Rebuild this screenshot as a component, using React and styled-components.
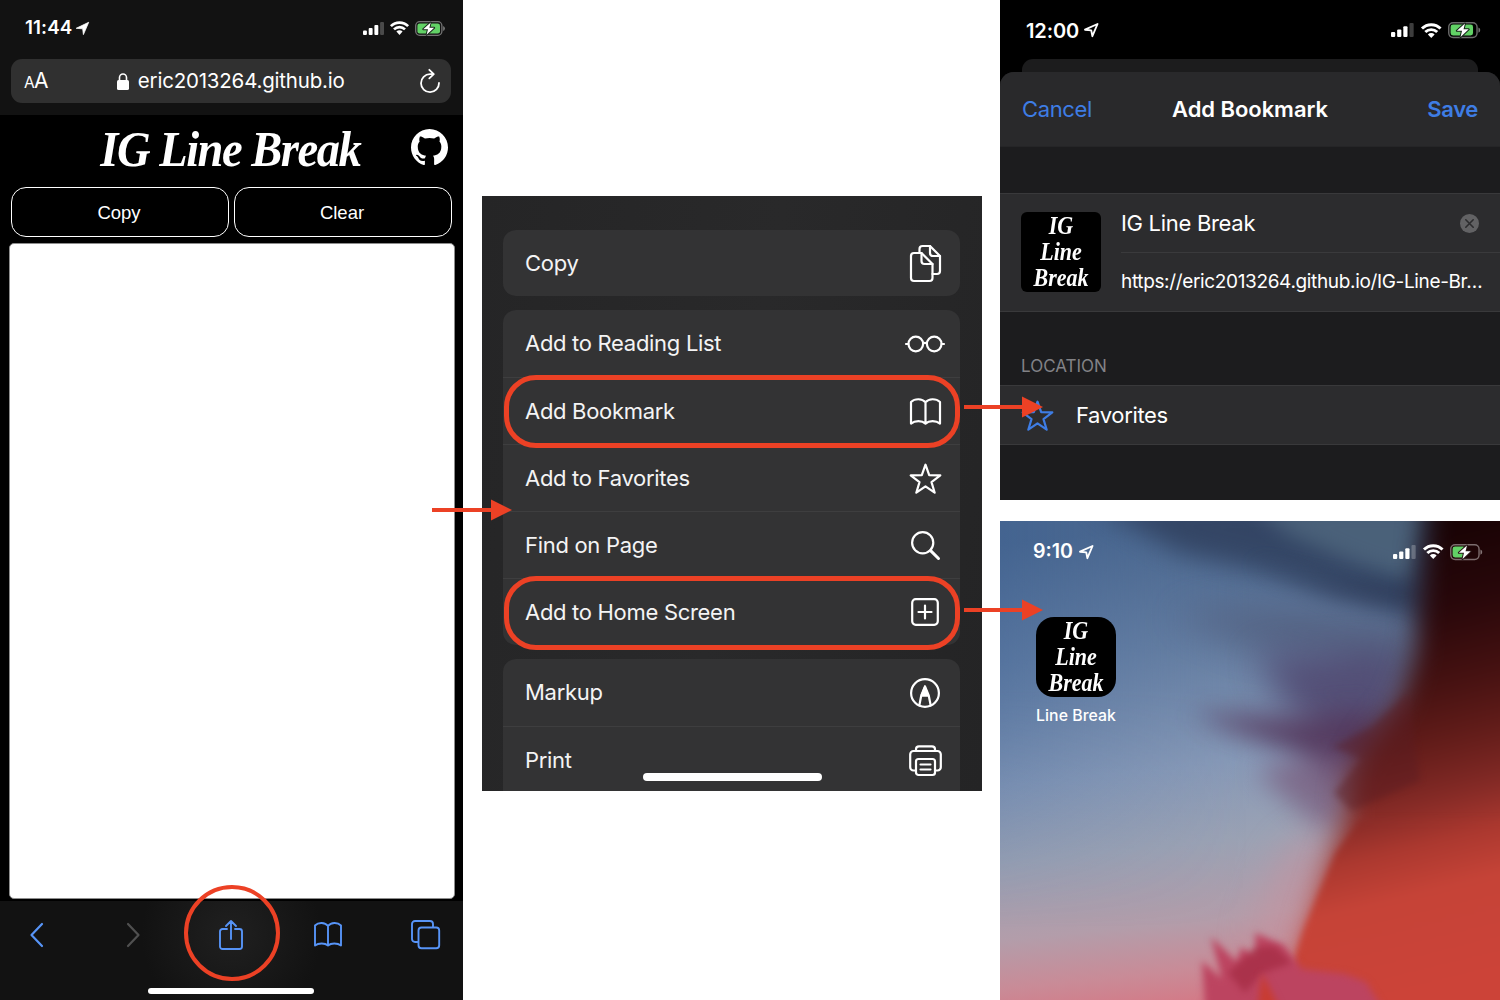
import React from 'react';
import styled, { createGlobalStyle } from 'styled-components';

const Global = createGlobalStyle`
  *, *::before, *::after { box-sizing: border-box; }
  body { margin: 0; background: #fff; }
  svg { display: block; flex: none; overflow: visible; }
`;

const RED = '#ec4125';
const BLUE = '#5794f7';

const Board = styled.main`
  position: relative;
  width: 1500px;
  height: 1000px;
  overflow: hidden;
  background: #fff;
  display: grid;
  column-gap: 19px;
  grid-template-columns: 463px 500px 499px;
  font-family: Inter, "Liberation Sans", sans-serif;
  color: #fff;
`;

const Text = styled.span`
  font-size: ${p => p.$size}px;
  font-weight: ${p => p.$weight || 400};
  letter-spacing: ${p => p.$track || 0}px;
  color: ${p => p.$color || '#fff'};
  line-height: 1.2;
  white-space: nowrap;
`;

/* ---------- status bar ---------- */

const StatusRow = styled.div`
  display: flex;
  align-items: center;
  height: ${p => p.$height}px;
  padding: ${p => p.$pad};
`;

const StatusIcons = styled.div`
  display: flex;
  align-items: center;
  gap: ${p => p.$gap}px;
  margin-left: auto;
`;

const ArrowSlot = styled.span`
  margin-left: ${p => p.$gap}px;
`;

const Signal = ({ k = 1 }) => (
  <svg width={21 * k} height={13 * k} viewBox="0 0 21 13">
    <rect x="0" y="8.4" width="3.9" height="4.6" rx="1" fill="#fff" />
    <rect x="5.7" y="6" width="3.9" height="7" rx="1" fill="#fff" />
    <rect x="11.4" y="3" width="3.9" height="10" rx="1" fill="#fff" />
    <rect x="17.1" y="0" width="3.9" height="13" rx="1" fill="#fff" opacity=".24" />
  </svg>
);

const Wifi = ({ k = 1 }) => (
  <svg width={19 * k} height={14 * k} viewBox="0 0 19 14">
    <g fill="none" stroke="#fff" strokeWidth="2.7">
      <path d="M.9 5.1A12.2 12.2 0 0 1 18.1 5.1" />
      <path d="M4 8.4A7.8 7.8 0 0 1 15 8.4" />
    </g>
    <path d="M6.4 10.6A4.4 4.4 0 0 1 12.6 10.6L9.5 14Z" fill="#fff" />
  </svg>
);

const Battery = ({ k = 1, level = 1, halo = '#17251a' }) => (
  <svg width={30 * k} height={15 * k} viewBox="0 0 30 15">
    <rect x=".7" y=".7" width="26.2" height="13.6" rx="4" fill="none" stroke="#fff" strokeOpacity=".42" strokeWidth="1.3" />
    <path d="M28.2 5v5q1.7-.6 1.7-2.5T28.2 5Z" fill="#fff" opacity=".45" />
    <rect x="2.4" y="2.4" width={22.6 * level} height="10.2" rx="2.3" fill="#62d266" />
    <path d="M15.7 1.4 8.2 8.2H13L11.6 13.8 19.2 6.8H14.4Z" fill="#fff" stroke={halo} strokeWidth="1.9" paintOrder="stroke" strokeLinejoin="round" />
  </svg>
);

const LocationArrow = ({ k = 1, filled }) => (
  <svg width={13 * k} height={13 * k} viewBox="0 0 13 13">
    <path
      d={filled ? 'M12.7.3 7.4 12.6 6.7 6.8.2 6.3Z' : 'M12.300.9 7.600 12 6.600 6.700 .9 6.100Z'}
      fill={filled ? '#fff' : 'none'} stroke="#fff" strokeWidth={filled ? 0.8 : 1.7} strokeLinejoin="round"
    />
  </svg>
);

/* ---------- brand lettering ---------- */

const script = `
  font-family: "Z003", "URW Chancery L", "Liberation Serif", serif;
  font-style: italic;
  font-weight: 700;
  color: #fff;
`;

const Brand = styled.h1`
  ${script}
  margin: 0 4px 0 0;
  font-size: 47px;
  line-height: 58px;
  letter-spacing: -1.5px;
  white-space: nowrap;
  transform: scale(.99, 1.1);
`;

const AppIcon = styled.div`
  ${script}
  flex: none;
  display: flex;
  flex-direction: column;
  align-items: center;
  justify-content: center;
  width: 80px;
  height: 80px;
  border-radius: ${p => p.$radius}px;
  background: #000;
  font-size: 22px;
  line-height: 26px;
`;

const IconWord = styled.span`
  height: 26px;
  transform: scaleY(1.12);
`;

const BrandIcon = ({ radius }) => (
  <AppIcon $radius={radius}><IconWord>IG</IconWord><IconWord>Line</IconWord><IconWord>Break</IconWord></AppIcon>
);

/* ---------- line icons ---------- */

const Line = ({ w, h, sw = 2.2, color = '#fff', children }) => (
  <svg width={w} height={h} viewBox={`0 0 ${w} ${h}`} fill="none" stroke={color} strokeWidth={sw} strokeLinecap="round" strokeLinejoin="round">
    {children}
  </svg>
);

const STAR = 'M16.5 1.7 20.2 12.1 31.3 12.4 22.5 19.1 25.7 29.7 16.5 23.4 7.3 29.7 10.5 19.1 1.7 12.4 12.8 12.1Z';

const icons = {
  copy: <Line w={31} h={37}>
    <path d="M9.5 7V4a3 3 0 0 1 3-3H20l10 10v15a3 3 0 0 1-3 3h-4.500" />
    <path d="M20 1v7a3 3 0 0 0 3 3h7" />
    <path d="M4 8h7.500L22.500 19v14a3 3 0 0 1-3 3H4a3 3 0 0 1-3-3V11a3 3 0 0 1 3-3Z" />
    <path d="M11.500 8v8a3 3 0 0 0 3 3h8" />
  </Line>,
  glasses: <Line w={40} h={17}>
    <circle cx="10.800" cy="9" r="7.300" /><circle cx="29.200" cy="9" r="7.300" />
    <path d="M1 9h2.300M18.200 8.300q1.800-.8 3.600 0M36.700 9H39" />
  </Line>,
  book: <Line w={31} h={27}>
    <path d="M15.500 4.200C12.200.4 5 .2 1 4v21.600c4-3.200 11-3.200 14.500 0 3.500-3.200 10.500-3.200 14.500 0V4C26 .2 18.800.4 15.500 4.200v21.200" />
  </Line>,
  star: <Line w={33} h={31}><path d={STAR} /></Line>,
  search: <Line w={29} h={29}><circle cx="11.700" cy="11.700" r="10.600" /><path d="M19.600 19.600 27.500 27.500" strokeWidth="3" /></Line>,
  plus: <Line w={28} h={28}><rect x="1.200" y="1.200" width="25.600" height="25.600" rx="3.500" /><path d="M14 7.500v13M7.500 14h13" /></Line>,
  markup: <Line w={30} h={30}>
    <circle cx="15" cy="15" r="13.900" />
    <path d="M9.300 27.500 11.200 17.700 15 8.500 18.800 17.700 20.700 27.500M11.200 17.700H18.800" />
    <path d="M15 8 18.500 17H11.500Z" fill="#fff" strokeWidth="1" />
  </Line>,
  print: <Line w={33} h={31}>
    <path d="M7 25.500H4.500A3.300 3.300 0 0 1 1.200 22.200V9.300A3.300 3.300 0 0 1 4.500 6h24a3.300 3.300 0 0 1 3.300 3.300v12.900a3.300 3.300 0 0 1-3.300 3.300H26" />
    <path d="M7 6V4.300A3 3 0 0 1 10 1.300H23A3 3 0 0 1 26 4.300V6" />
    <rect x="7" y="14" width="19" height="16" rx="2.500" />
    <path d="M11.500 19.500h10M11.500 24.500h10" />
  </Line>,
};

/* ---------- left phone ---------- */

const Phone = styled.section`
  display: flex;
  flex-direction: column;
  background: #121212;
  height: 1000px;
`;

const AddressBar = styled.div`
  display: flex;
  align-items: center;
  height: 44px;
  margin: 0 12px 12px 11px;
  padding: 0 11px 0 13px;
  border-radius: 11px;
  background: #303030;
`;

const Address = styled.div`
  display: flex;
  align-items: center;
  gap: 9px;
  margin: 0 auto;
  padding-right: 7px;
`;

const SizeToggle = styled.span`
  display: flex;
  align-items: baseline;
`;

const Page = styled.div`
  display: flex;
  flex-direction: column;
  height: 786px;
  padding: 0 8px 2px 9px;
  background: #000;
`;

const PageHeader = styled.header`
  display: grid;
  grid-template-columns: 1fr 280px 1fr;
  align-items: center;
  justify-items: center;
  height: 72px;
  padding-bottom: 7px;
`;

const GithubLink = styled.div`
  justify-self: end;
  padding-right: 7px;
`;

const ButtonRow = styled.div`
  display: grid;
  grid-template-columns: 1fr 1fr;
  gap: 5px;
  height: 50px;
  padding: 0 3px 0 2px;
`;

const PillButton = styled.button`
  border: 1.4px solid #fff;
  border-radius: 15px;
  background: #000;
  color: #fff;
  font: 400 18.5px "Liberation Sans", Arial, sans-serif;
  padding: 1px 2px 0 0;
`;

const Editor = styled.div`
  flex: 1;
  margin-top: 6px;
  border: 1px solid #8d8d8d;
  border-radius: 5px;
  background: #fff;
`;

const Toolbar = styled.nav`
  display: flex;
  align-items: center;
  justify-content: space-between;
  height: 99px;
  padding: 0 23px 32px 22px;
  background: radial-gradient(circle at 50% 33px, #202020 0, #121212 90px);
`;

const ToolSlot = styled.span`
  display: flex;
  justify-content: center;
  width: 29px;
`;

const HomeBar = styled.div`
  width: ${p => p.$width}px;
  height: ${p => p.$height}px;
  border-radius: 4px;
  background: #fff;
`;

const HomeSlot = styled.div`
  display: flex;
  justify-content: center;
  margin-top: -12px;
  padding-right: 1px;
`;

/* ---------- share sheet ---------- */

const ShareSheet = styled.section`
  position: relative;
  display: flex;
  flex-direction: column;
  gap: 14px;
  height: 595px;
  margin-top: 196px;
  padding: 34px 22px 0 21px;
  overflow: hidden;
  background: linear-gradient(100deg, #252526, #29292a 50%, #242425);
`;

const Group = styled.div`
  flex: none;
  padding-bottom: ${p => p.$extra || 0}px;
  border-radius: 13px;
  background: #333334;
`;

const Row = styled.div`
  display: flex;
  align-items: center;
  height: ${p => p.$height || 67}px;
  padding-left: 22px;
  & + & { border-top: 1px solid #3e3e3f; }
`;

const IconSlot = styled.span`
  display: flex;
  justify-content: center;
  width: 70px;
  margin-left: auto;
`;

const FloatingHome = styled.div`
  position: absolute;
  left: 161px;
  bottom: 10px;
`;

/* ---------- right column ---------- */

const RightColumn = styled.div`
  display: flex;
  flex-direction: column;
  gap: 21px;
  width: 500px;
  margin-left: -1px;
`;

const BookmarkScreen = styled.section`
  display: flex;
  flex-direction: column;
  height: 500px;
  background: #000;
`;

const BackSheet = styled.div`
  flex: none;
  height: 13px;
  margin: 0 22px;
  border-radius: 11px 11px 0 0;
  background: #1c1c1d;
`;

const Sheet = styled.div`
  flex: 1;
  border-radius: 14px 14px 0 0;
  background: #1c1c1e;
  overflow: hidden;
`;

const SheetHeader = styled.header`
  display: grid;
  grid-template-columns: 1fr auto 1fr;
  align-items: center;
  height: 75px;
  padding: 0 22px;
  background: #29292b;
  border-bottom: 1px solid #252527;
  & > :last-child { justify-self: end; }
`;

const BookmarkCard = styled.div`
  display: flex;
  height: 119px;
  margin-top: 46px;
  padding: 18px 0 0 21px;
  border: solid #39393b;
  border-width: 1px 0;
  background: #2c2c2e;
`;

const Fields = styled.div`
  flex: 1;
  margin: -18px 0 0 20px;
`;

const Field = styled.div`
  display: flex;
  align-items: center;
  justify-content: space-between;
  height: ${p => p.$height}px;
  padding-right: ${p => p.$right}px;
  & + & { border-top: 1px solid #3a3a3c; }
`;

const SectionLabel = styled.div`
  display: flex;
  align-items: flex-end;
  height: 73px;
  padding: 0 0 9px 21px;
`;

const LocationRow = styled.div`
  display: flex;
  align-items: center;
  gap: 22px;
  height: 60px;
  padding-left: 21px;
  border: solid #39393b;
  border-width: 1px 0;
  background: #2c2c2e;
`;

const HomeScreen = styled.section`
  position: relative;
  height: 479px;
  overflow: hidden;
`;

const Wallpaper = styled.div`
  position: absolute;
  inset: 0;
`;

const HomeContent = styled.div`
  position: relative;
`;

const AppTile = styled.div`
  display: flex;
  flex-direction: column;
  align-items: center;
  gap: 10px;
  width: 96px;
  margin: 34px 0 0 28px;
`;

/* ---------- annotations ---------- */

const Ring = styled.div`
  position: absolute;
  left: ${p => p.$x}px;
  top: ${p => p.$y}px;
  width: ${p => p.$w}px;
  height: ${p => p.$h}px;
  border: ${p => p.$stroke}px solid ${RED};
  border-radius: ${p => p.$radius};
`;

const Pointer = styled.div`
  position: absolute;
  left: ${p => p.$x}px;
  top: ${p => p.$y}px;
`;

const PointerArrow = ({ x, y, w = 79 }) => (
  <Pointer $x={x} $y={y}>
    <svg width={w} height="22" viewBox={`0 0 ${w} 22`} fill={RED}>
      <rect x="0" y="9" width={w - 18} height="4" />
      <path d={`M${w - 21} .5V21.500L${w} 11Z`} />
    </svg>
  </Pointer>
);

const WallpaperArt = () => (
  <svg width="500" height="479" viewBox="0 0 500 479">
    <defs>
      <linearGradient id="sky" gradientUnits="userSpaceOnUse" x1="220" y1="0" x2="270" y2="479">
        <stop offset="0" stopColor="#48648b" />
        <stop offset=".25" stopColor="#647da1" />
        <stop offset=".5" stopColor="#8799b7" />
        <stop offset=".66" stopColor="#9ba2b4" />
        <stop offset=".82" stopColor="#b39daa" />
        <stop offset=".92" stopColor="#c98b97" />
        <stop offset="1" stopColor="#d57784" />
      </linearGradient>
      <linearGradient id="left" x1="0" y1="0" x2="1" y2="0">
        <stop offset="0" stopColor="#3d659b" stopOpacity=".36" />
        <stop offset=".5" stopColor="#5b7ca8" stopOpacity="0" />
      </linearGradient>
      <linearGradient id="petal" gradientUnits="userSpaceOnUse" x1="400" y1="0" x2="510" y2="450">
        <stop offset="0" stopColor="#160203" />
        <stop offset=".2" stopColor="#28070a" />
        <stop offset=".36" stopColor="#451111" />
        <stop offset=".49" stopColor="#641d1a" />
        <stop offset=".6" stopColor="#842a26" />
        <stop offset=".69" stopColor="#ab382f" />
        <stop offset=".79" stopColor="#c54337" />
        <stop offset="1" stopColor="#cc4338" />
      </linearGradient>
      <linearGradient id="fade" x1="0" y1="0" x2="0" y2="1">
        <stop offset="0" stopColor="#fff" />
        <stop offset=".35" stopColor="#fff" />
        <stop offset=".85" stopColor="#000" />
      </linearGradient>
      <mask id="sideMask"><rect width="500" height="479" fill="url(#fade)" /></mask>
      <filter id="b3" x="-20%" y="-20%" width="140%" height="140%" colorInterpolationFilters="sRGB"><feGaussianBlur stdDeviation="3.5" /></filter>
      <filter id="b8" x="-40%" y="-40%" width="180%" height="180%" colorInterpolationFilters="sRGB"><feGaussianBlur stdDeviation="10" /></filter>
      <filter id="b12" x="-60%" y="-60%" width="220%" height="220%" colorInterpolationFilters="sRGB"><feGaussianBlur stdDeviation="13" /></filter>
      <filter id="b16" x="-60%" y="-60%" width="220%" height="220%" colorInterpolationFilters="sRGB"><feGaussianBlur stdDeviation="18" /></filter>
    </defs>
    <rect width="500" height="479" fill="url(#sky)" />
    <rect width="500" height="479" fill="url(#left)" mask="url(#sideMask)" />
    <path d="M90-20 440-30V105L380 88 290 58 180 32Z" fill="#30405e" opacity=".85" filter="url(#b12)" />
    <path d="M250-16H430L410 60 350 40 290 14Z" fill="#50687f" opacity=".8" filter="url(#b8)" />
    <path d="M250 42 330 60 420 66 400 88 330 74Z" fill="#2a3754" opacity=".6" filter="url(#b8)" />
    <path d="M170 92 300 84 420 100V170L330 140 240 124Z" fill="#4c5573" opacity=".6" filter="url(#b16)" />
    <path d="M255 135 400 128 405 215 340 235 290 190Z" fill="#4c416a" opacity=".8" filter="url(#b16)" />
    <path d="M190 192 290 196 370 190 385 235 335 262 295 232 240 212Z" fill="#53355a" opacity=".85" filter="url(#b12)" />
    <path d="M255 250 300 238 360 235 345 300 325 312Z" fill="#77587a" opacity=".7" filter="url(#b12)" />
    <path d="M285 330 335 300 325 380 295 430 250 420Z" fill="#cc8f9b" opacity=".5" filter="url(#b16)" />
    <path d="M430-60 420 60 413 135 398 180 366 222 346 260 344 296 326 346 300 430 302 540H600V-60Z" fill="url(#petal)" filter="url(#b12)" />
    <path d="M408 172 372 206 332 226 362 238 334 272 352 290 420 260Z" fill="#5a1c22" opacity=".45" filter="url(#b3)" />
    <path d="M360 300 336 332 318 374 304 408 292 445 292 520H540V300Z" fill="url(#petal)" filter="url(#b3)" />
    <path d="M206 500 202 440 222 458 211 416 237 441 241 426 256 436 255 412 284 424 302 448 345 453 366 461 390 500Z" fill="#bc4460" filter="url(#b3)" />
    <path d="M228 452 256 426 275 425 292 442 262 452 245 472Z" fill="#a52c44" opacity=".75" filter="url(#b3)" />
    <path d="M256 500 262 452 286 500Z" fill="#c83c32" filter="url(#b3)" />
  </svg>
);

const rows = [
  ['Add to Reading List', 'glasses'],
  ['Add Bookmark', 'book'],
  ['Add to Favorites', 'star'],
  ['Find on Page', 'search'],
  ['Add to Home Screen', 'plus'],
];

const RowItem = ({ label, icon, height }) => (
  <Row $height={height}>
    <Text $size={22} $track={-0.3} $color="#f4f4f4">{label}</Text>
    <IconSlot>{icons[icon]}</IconSlot>
  </Row>
);

export default function App() {
  return (
    <Board>
      <Global />
      <Phone>
        <StatusRow $height={59} $pad="0 18px 3px 25px">
          <Text $size={18.8} $weight={600} $track={0.1}>11:44</Text>
          <ArrowSlot $gap={4}><LocationArrow filled /></ArrowSlot>
          <StatusIcons $gap={6}><Signal /><Wifi /><Battery /></StatusIcons>
        </StatusRow>
        <AddressBar>
          <SizeToggle><Text $size={15.5} $track={-0.8}>A</Text><Text $size={21}>A</Text></SizeToggle>
          <Address>
            <svg width="12" height="17" viewBox="0 0 12 17">
              <rect x="0" y="7" width="12" height="10" rx="1.600" fill="#fff" />
              <path d="M2.500 8V4.500a3.500 3.500 0 0 1 7 0V8" fill="none" stroke="#fff" strokeWidth="1.600" />
            </svg>
            <Text $size={20.5} $track={-0.2}>eric2013264.github.io</Text>
          </Address>
          <svg width="20" height="24" viewBox="0 0 20 24" fill="none" stroke="#fff" strokeWidth="1.800" strokeLinecap="round" strokeLinejoin="round">
            <path d="M13.500 5.200H10A9 9 0 1 0 19 14M9.300 .8 13.800 5.200 9.300 9.400" />
          </svg>
        </AddressBar>
        <Page>
          <PageHeader>
            <span />
            <Brand>IG Line Break</Brand>
            <GithubLink>
              <svg width="37" height="37" viewBox="0 0 16 16" fill="#fff">
                <path d="M8 0C3.58 0 0 3.58 0 8c0 3.54 2.29 6.53 5.47 7.59.4.07.55-.17.55-.38 0-.19-.01-.82-.01-1.49-2.01.37-2.53-.49-2.69-.94-.09-.23-.48-.94-.82-1.13-.28-.15-.68-.52-.01-.53.63-.01 1.08.58 1.23.82.72 1.21 1.87.87 2.33.66.07-.52.28-.87.51-1.07-1.78-.2-3.64-.89-3.64-3.95 0-.87.31-1.59.82-2.15-.08-.2-.36-1.02.08-2.12 0 0 .67-.21 2.2.82.64-.18 1.32-.27 2-.27s1.36.09 2 .27c1.53-1.04 2.2-.82 2.2-.82.44 1.1.16 1.92.08 2.12.51.56.82 1.27.82 2.15 0 3.07-1.87 3.75-3.65 3.95.29.25.54.73.54 1.48 0 1.07-.01 1.93-.01 2.2 0 .21.15.46.55.38A8.01 8.01 0 0 0 16 8c0-4.42-3.58-8-8-8z" />
              </svg>
            </GithubLink>
          </PageHeader>
          <ButtonRow><PillButton>Copy</PillButton><PillButton>Clear</PillButton></ButtonRow>
          <Editor />
        </Page>
        <Toolbar>
          <ToolSlot><Line w={13} h={24} color={BLUE}><path d="M12 1 1.500 12 12 23" /></Line></ToolSlot>
          <ToolSlot><Line w={13} h={24} color="#505050"><path d="M1 1 11.500 12 1 23" /></Line></ToolSlot>
          <ToolSlot><Line w={24} h={30} color={BLUE} sw={1.9}>
            <path d="M8 9H3.500A2.500 2.500 0 0 0 1 11.500V26.500A2.500 2.500 0 0 0 3.500 29H20.500A2.500 2.500 0 0 0 23 26.500V11.500A2.500 2.500 0 0 0 20.500 9H16M12 19V1M7 6 12 1 17 6" />
          </Line></ToolSlot>
          <ToolSlot><Line w={28} h={25} color={BLUE} sw={1.9}>
            <path d="M14 4C11 .2 4.500 0 1 3.500V23.500C4.500 20.800 11 20.800 14 23.500 17 20.800 23.500 20.800 27 23.500V3.500C23.500 0 17 .2 14 4V23" />
          </Line></ToolSlot>
          <ToolSlot><Line w={29} h={29} color={BLUE} sw={1.9}>
            <path d="M7 22H4a3 3 0 0 1-3-3V4a3 3 0 0 1 3-3H19a3 3 0 0 1 3 3V7" />
            <rect x="7.500" y="7.500" width="20.700" height="20.700" rx="3" />
          </Line></ToolSlot>
        </Toolbar>
        <HomeSlot><HomeBar $width={166} $height={6} /></HomeSlot>
      </Phone>

      <ShareSheet>
        <Group><RowItem label="Copy" icon="copy" height={66} /></Group>
        <Group>{rows.map(([label, icon]) => <RowItem key={label} label={label} icon={icon} />)}</Group>
        <Group $extra={20}><RowItem label="Markup" icon="markup" /><RowItem label="Print" icon="print" /></Group>
        <FloatingHome><HomeBar $width={179} $height={8} /></FloatingHome>
      </ShareSheet>

      <RightColumn>
        <BookmarkScreen>
          <StatusRow $height={59} $pad="2px 20px 0 26px">
            <Text $size={20} $weight={600} $track={-0.1}>12:00</Text>
            <ArrowSlot $gap={5}><LocationArrow k={1.1} /></ArrowSlot>
            <StatusIcons $gap={6.5}><Signal k={1.08} /><Wifi k={1.08} /><Battery k={1.08} level={0.92} /></StatusIcons>
          </StatusRow>
          <BackSheet />
          <Sheet>
            <SheetHeader>
              <Text $size={22} $track={-0.35} $color="#3e7de5">Cancel</Text>
              <Text $size={22} $weight={600} $track={-0.05}>Add Bookmark</Text>
              <Text $size={22} $weight={600} $color="#3e7de5" $track={-0.35}>Save</Text>
            </SheetHeader>
            <BookmarkCard>
              <BrandIcon radius={6} />
              <Fields>
                <Field $height={58} $right={21}>
                  <Text $size={22} $track={-0.3}>IG Line Break</Text>
                  <svg width="19" height="19" viewBox="0 0 19 19">
                    <circle cx="9.500" cy="9.500" r="9.500" fill="#626264" />
                    <path d="M5.800 5.800 13.200 13.200M13.200 5.800 5.800 13.200" stroke="#2c2c2e" strokeWidth="1.600" strokeLinecap="round" />
                  </svg>
                </Field>
                <Field $height={59} $right={10}><Text $size={19} $track={-0.35}>https://eric2013264.github.io/IG-Line-Br…</Text></Field>
              </Fields>
            </BookmarkCard>
            <SectionLabel><Text $size={17} $color="#828286">LOCATION</Text></SectionLabel>
            <LocationRow>
              <Line w={33} h={31} color="#3e7de5"><path d={STAR} /></Line>
              <Text $size={22} $track={-0.35}>Favorites</Text>
            </LocationRow>
          </Sheet>
        </BookmarkScreen>
        <HomeScreen>
          <Wallpaper><WallpaperArt /></Wallpaper>
          <HomeContent>
            <StatusRow $height={62} $pad="0 18px 0 33px">
              <Text $size={19.6} $weight={600} $track={0}>9:10</Text>
              <ArrowSlot $gap={6}><LocationArrow k={1.1} /></ArrowSlot>
              <StatusIcons $gap={6.5}><Signal k={1.08} /><Wifi k={1.08} /><Battery k={1.08} level={0.52} halo="#2a1718" /></StatusIcons>
            </StatusRow>
            <AppTile>
              <BrandIcon radius={18} />
              <Text $size={15.8} $weight={500} $track={0.05}>Line Break</Text>
            </AppTile>
          </HomeContent>
        </HomeScreen>
      </RightColumn>

      <Ring $x={184} $y={885} $w={96} $h={96} $stroke={4} $radius="50%" />
      <Ring $x={503.5} $y={375} $w={456.5} $h={72.5} $stroke={5} $radius="32px" />
      <Ring $x={503.5} $y={576} $w={456.5} $h={73.5} $stroke={5} $radius="32px" />
      <PointerArrow x={432} y={499} w={80} />
      <PointerArrow x={964} y={396} />
      <PointerArrow x={964} y={599} />
    </Board>
  );
}
